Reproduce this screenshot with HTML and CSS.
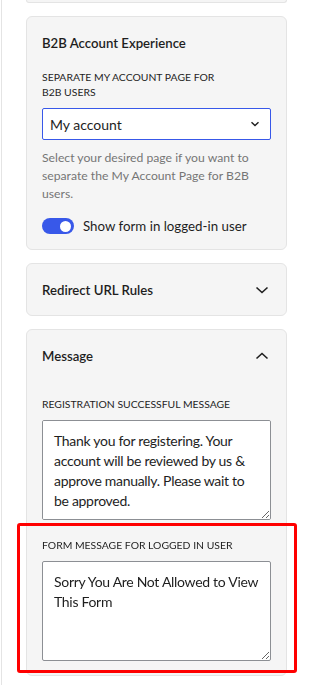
FILE: index.html
```html
<!DOCTYPE html>
<html lang="en">
<head>
<meta charset="utf-8">
<title>Settings sidebar</title>
<link rel="stylesheet" href="styles.css">
</head>
<body>
<div class="frame">
  <div class="panel">
    <div class="card card-cut"></div>

    <section class="card card-open">
      <h2 class="card-title">B2B Account Experience</h2>
      <div class="field">
        <label class="field-label">Separate my account page for<br>B2B users</label>
        <div class="select">
          <span>My account</span>
          <svg class="select-chevron" width="10" height="6" viewBox="0 0 10 6"><path d="M1.5 1.2 L5 4.6 L8.5 1.2" fill="none" stroke="#1e1e1e" stroke-width="1.4"/></svg>
        </div>
        <p class="help">Select your desired page if you want to separate the My Account Page for B2B users.</p>
      </div>
      <div class="toggle-row">
        <span class="toggle"><span class="knob"></span></span>
        <span class="toggle-label">Show form in logged-in user</span>
      </div>
    </section>

    <section class="card">
      <div class="card-head">
        <h2 class="card-title">Redirect URL Rules</h2>
        <svg width="14" height="8" viewBox="0 0 14 8"><path d="M1.5 1.5 L7 6.5 L12.5 1.5" fill="none" stroke="#1e1e1e" stroke-width="1.6"/></svg>
      </div>
    </section>

    <section class="card card-msg">
      <div class="card-head">
        <h2 class="card-title">Message</h2>
        <svg width="14" height="8" viewBox="0 0 14 8"><path d="M1.5 6.5 L7 1.5 L12.5 6.5" fill="none" stroke="#1e1e1e" stroke-width="1.6"/></svg>
      </div>
      <div class="card-body">
        <div class="field">
          <label class="field-label">Registration successful message</label>
          <textarea class="area" rows="4">Thank you for registering. Your account will be reviewed by us &amp; approve manually. Please wait to be approved.</textarea>
        </div>
        <div class="field field-marked">
          <label class="field-label">Form message for logged in user</label>
          <textarea class="area" rows="4">Sorry You Are Not Allowed to View This Form</textarea>
          <span class="highlight"></span>
        </div>
      </div>
    </section>
  </div>
</div>
</body>
</html>
```

FILE: styles.css
```css
* { box-sizing: border-box; }
html, body { margin: 0; padding: 0; background: #ffffff; }
body {
  font-family: Lato, "Noto Sans", sans-serif;
  color: #1e1e1e;
  width: 310px;
  height: 685px;
  overflow: hidden;
}
.frame {
  margin-left: 1px;
  border-left: 1px solid #e4e4e4;
  min-height: 685px;
}
.panel {
  padding-left: 24px;
  width: 285px;
  display: flex;
  flex-direction: column;
  gap: 13px;
}
.card {
  background: #f5f5f5;
  border: 1px solid #e4e4e4;
  border-radius: 6px;
}
.card-cut {
  height: 3px;
  border-top: none;
  border-radius: 0 0 6px 6px;
}
.card-open {
  padding: 16px 15px 15px 15px;
}
.card-title {
  margin: 0;
  font-size: 13.2px;
  font-weight: 600;
  line-height: 20px;
}
.card-open .card-title { margin-bottom: 17px; }
.card-head {
  display: flex;
  align-items: center;
  justify-content: space-between;
  padding: 16px 17px 15px 15px;
}
.field {
  display: flex;
  flex-direction: column;
}
.field-label {
  font-size: 10.4px;
  line-height: 15px;
  text-transform: uppercase;
  color: #1e1e1e;
  margin-bottom: 8px;
}
.select {
  height: 32px;
  border: 1.5px solid #3858e9;
  border-radius: 2px;
  background: #fff;
  display: flex;
  align-items: center;
  justify-content: space-between;
  padding: 0 10px 0 7px;
  font-size: 14px;
}
.help {
  margin: 9px 0 0;
  font-size: 12.2px;
  line-height: 18px;
  color: #757575;
}
.toggle-row {
  display: flex;
  align-items: center;
  gap: 9px;
  margin-top: 15px;
}
.toggle {
  width: 32px;
  height: 16px;
  border-radius: 8px;
  background: #3858e9;
  display: flex;
  align-items: center;
  justify-content: flex-end;
  padding-right: 3px;
}
.knob {
  width: 11px;
  height: 11px;
  border-radius: 50%;
  background: #fff;
}
.toggle-label { font-size: 13.3px; }
.card-msg { margin-bottom: 20px; }
.card-body {
  padding: 16px 15px 14px 15px;
  display: flex;
  flex-direction: column;
  gap: 18px;
}
.area {
  width: 100%;
  height: 100px;
  border: 1px solid #8c8f94;
  border-radius: 2px;
  background: #fff;
  font-family: inherit;
  font-size: 14px;
  letter-spacing: -0.3px;
  line-height: 20px;
  color: #1e1e1e;
  padding: 10px 10px 10px 11px;
  margin: 0;
  display: block;
}
.field-marked { position: relative; }
.highlight {
  position: absolute;
  left: -25px;
  right: -26px;
  top: -15px;
  bottom: -12px;
  border: 3.5px solid #ff0000;
  border-radius: 3px;
  pointer-events: none;
}
```
